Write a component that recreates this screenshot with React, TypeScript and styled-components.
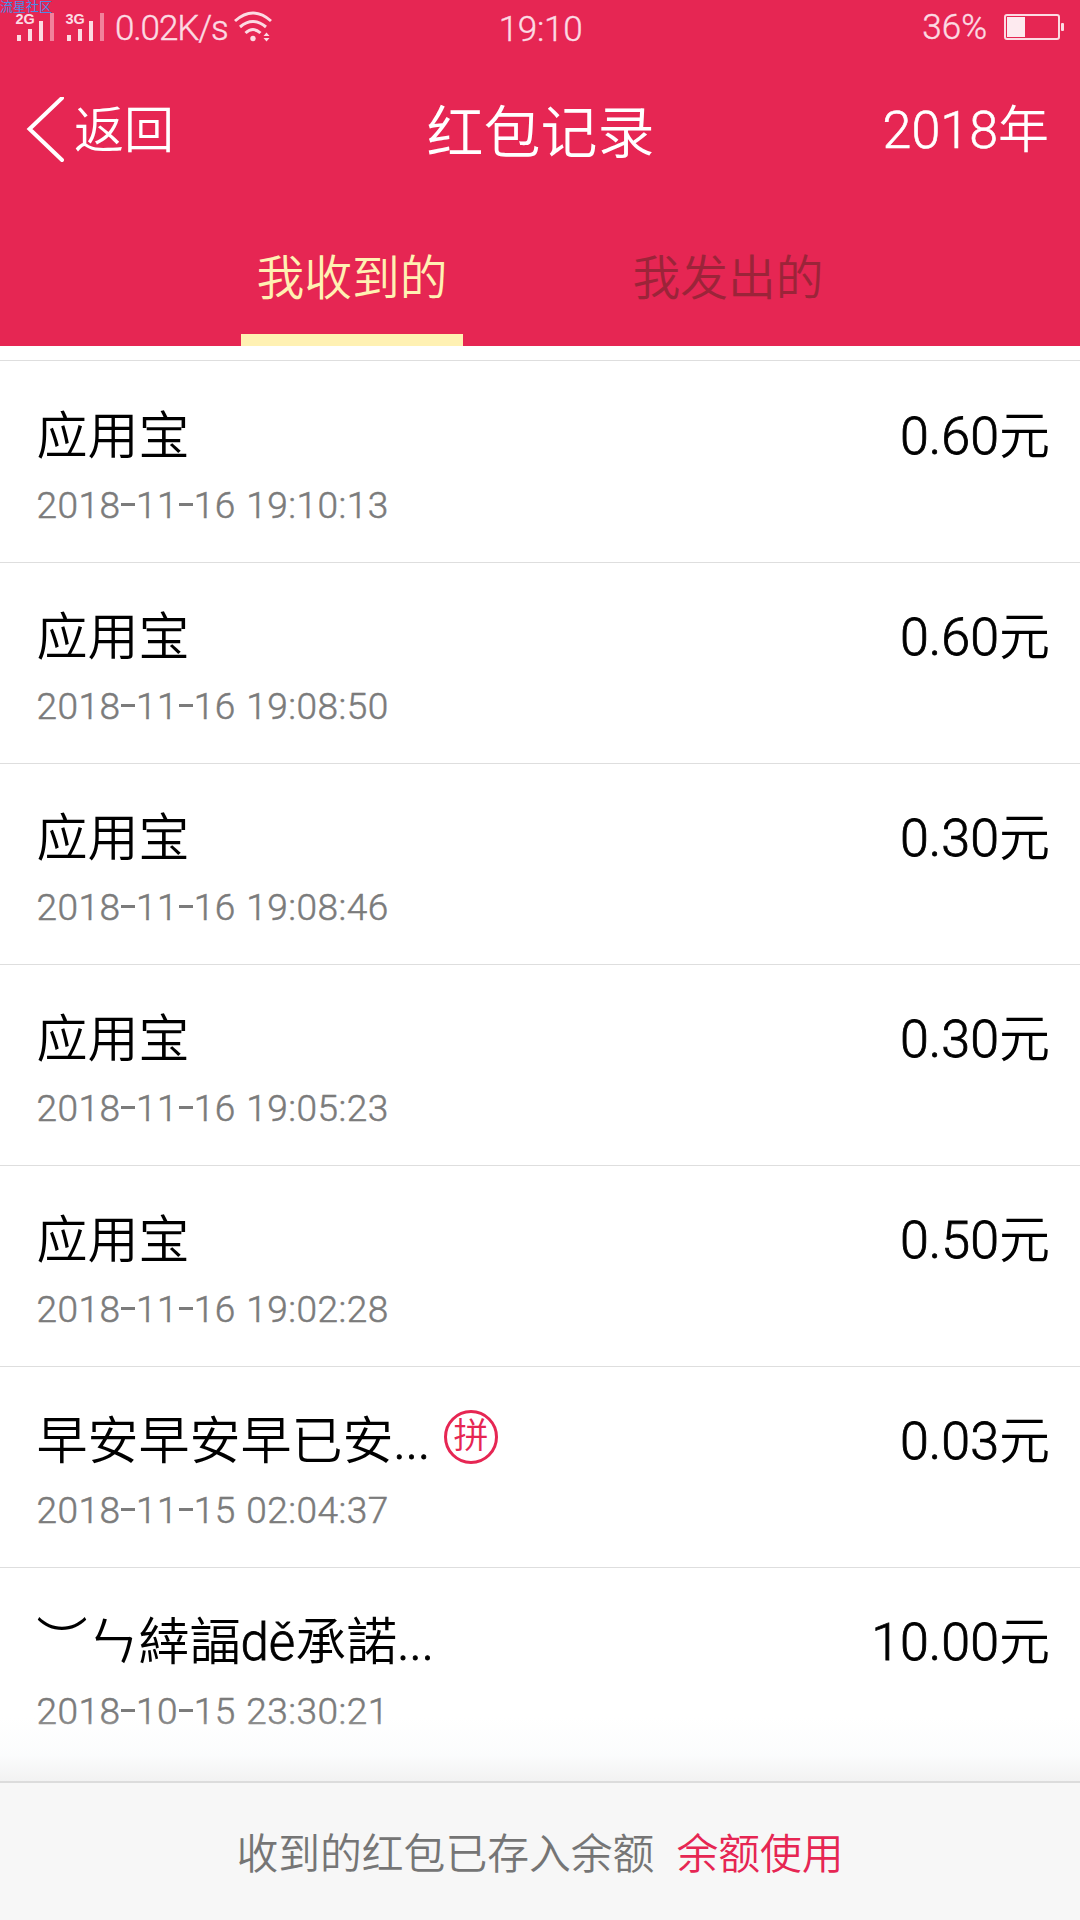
import React from "react";
import styled, { createGlobalStyle } from "styled-components";

const PINK = "#e62653";
const CREAM = "#fff1b3";
const FONT = `Roboto, "Noto Sans CJK SC", "Noto Sans CJK TC", sans-serif`;

const GlobalStyle = createGlobalStyle`
  *, *::before, *::after { box-sizing: border-box; }
  body { margin: 0; background: #fff; font-family: ${FONT}; }
`;

const Screen = styled.div`
  display: flex;
  flex-direction: column;
  width: 1080px;
  height: 1920px;
  overflow: hidden;
  background: #fff;
`;

const Header = styled.header`
  position: relative;
  display: flex;
  flex-direction: column;
  flex: none;
  height: 346px;
  background: ${PINK};
  color: #fff;
`;

const Watermark = styled.span`
  position: absolute;
  left: 0;
  top: 0;
  font-size: 13px;
  line-height: 13px;
  color: #4a8be6;
`;

const StatusBar = styled.div`
  display: grid;
  grid-template-columns: 1fr auto 1fr;
  height: 56px;
  padding: 0 15px 0 17px;
  color: #fcdbe3;
`;

const StatusGroup = styled.div<{ $end?: boolean }>`
  display: flex;
  align-items: flex-start;
  justify-content: ${(p) => (p.$end ? "flex-end" : "flex-start")};
`;

const StatusText = styled.span<{ $top: number; $spacing?: number; $pull?: number }>`
  margin-top: ${(p) => p.$top}px;
  margin-left: ${(p) => -(p.$pull ?? 0)}px;
  font-size: 35px;
  line-height: 40px;
  font-weight: 300;
  -webkit-text-stroke: 0.4px currentColor;
  letter-spacing: ${(p) => p.$spacing ?? 0}px;
  white-space: nowrap;
`;

const SignalIcon = styled.svg`
  flex: none;
  overflow: visible;
  width: 38px;
  height: 30px;
  margin: 12px 12px 0 0;
`;

const WifiIcon = styled.svg`
  flex: none;
  width: 38px;
  height: 32px;
  margin: 11px 0 0 6px;
`;

const BatteryIcon = styled.svg`
  flex: none;
  width: 61px;
  height: 26px;
  margin: 14px 0 0 17px;
`;

const NavBar = styled.nav`
  display: grid;
  grid-template-columns: 1fr auto 1fr;
  align-items: center;
  height: 148px;
  padding: 0 31px 0 26px;
`;

const BackButton = styled.button`
  display: flex;
  align-items: center;
  gap: 10px;
  padding: 0;
  border: 0;
  background: none;
  color: inherit;
  font: 350 50px/60px ${FONT};
`;

const BackLabel = styled.span`
  margin-top: 2px;
`;

const Title = styled.h1`
  margin: 7px -3px 0 3px;
  font-size: 57px;
  line-height: 66px;
  font-weight: 350;
`;

const YearButton = styled(BackButton)`
  justify-self: end;
  gap: 0;
  margin-top: 2px;
  font-size: 51px;
`;

const Tabs = styled.div`
  display: flex;
  justify-content: center;
  gap: 154px;
  height: 142px;
`;

const Tab = styled.button<{ $active?: boolean }>`
  width: 222px;
  padding: 0;
  border: 0;
  border-bottom: 12px solid ${(p) => (p.$active ? CREAM : "transparent")};
  background: none;
  color: ${(p) => (p.$active ? CREAM : "#9b2439")};
  font: 350 47.8px/56px ${FONT};
`;

const TabLabel = styled.span`
  display: block;
  margin-top: 20px;
`;

const List = styled.main`
  flex: 1;
  display: flex;
  flex-direction: column;
  padding-top: 14px;
`;

const Row = styled.article`
  flex: none;
  display: flex;
  justify-content: space-between;
  height: 201px;
  padding: 45px 30px 0 36.5px;
  border-top: 1px solid #dedede;
  &:first-child { height: 202px; padding-top: 46px; }
`;

const Info = styled.div`
  display: flex;
  flex-direction: column;
`;

const NameLine = styled.div`
  display: flex;
  align-items: center;
  height: 60px;
  color: #000;
  font-size: 51px;
  line-height: 60px;
  font-weight: 350;
  white-space: nowrap;
`;

const Latin = styled.span`
  font-weight: 300;
  -webkit-text-stroke: 0.8px currentColor;
`;

const Badge = styled.span`
  display: flex;
  align-items: center;
  justify-content: center;
  width: 54px;
  height: 54px;
  margin: -10px 0 0 14px;
  border: 3px solid ${PINK};
  border-radius: 50%;
  color: ${PINK};
  font-size: 35px;
  line-height: 48px;
`;

const DateLine = styled.time`
  margin-top: 18px;
  color: #7b7b7b;
  font-size: 37px;
  line-height: 42px;
  font-weight: 300;
  letter-spacing: 0.5px;
  word-spacing: 1px;
  -webkit-text-stroke: 0.5px currentColor;
  white-space: nowrap;
`;

const Dash = styled.span`
  display: inline-block;
  width: 14px;
  height: 3px;
  margin: 0 1px 0 0.5px;
  vertical-align: 12px;
  background: currentColor;
`;

const Amount = styled.span`
  height: 60px;
  color: #000;
  font-size: 51px;
  line-height: 60px;
  font-weight: 350;
  white-space: nowrap;
`;

const Digits = styled.span<{ $stroke?: number }>`
  font-size: 52px;
  font-weight: 300;
  -webkit-text-stroke: ${(p) => p.$stroke ?? 0.8}px currentColor;
`;

const Footer = styled.footer`
  position: relative;
  flex: none;
  display: flex;
  justify-content: center;
  height: 139px;
  padding-top: 44px;
  border-top: 2px solid #dcdcdc;
  background: #f7f7f7;
  color: #757575;
  font-size: 41.8px;
  line-height: 56px;
  font-weight: 350;
  &::before {
    content: "";
    position: absolute;
    left: 0;
    right: 0;
    bottom: 100%;
    height: 64px;
    margin-bottom: 2px;
    background: linear-gradient(rgba(240, 240, 240, 0), rgba(250, 251, 252, 0.8) 60%, #f2f2f2);
  }
`;

const FooterLink = styled.a`
  margin-left: 22px;
  color: ${PINK};
`;

const records = [
  { name: "应用宝", amount: "0.60", date: "2018-11-16 19:10:13" },
  { name: "应用宝", amount: "0.60", date: "2018-11-16 19:08:50" },
  { name: "应用宝", amount: "0.30", date: "2018-11-16 19:08:46" },
  { name: "应用宝", amount: "0.30", date: "2018-11-16 19:05:23" },
  { name: "应用宝", amount: "0.50", date: "2018-11-16 19:02:28" },
  { name: "早安早安早已安...", amount: "0.03", date: "2018-11-15 02:04:37", lucky: true },
  { name: "︶ㄣ緈諨dě承諾...", amount: "10.00", date: "2018-10-15 23:30:21" },
];

function Signal({ label }: { label: string }) {
  return (
    <SignalIcon viewBox="0 0 38 30" fill="#fcdbe3">
      <text x="-1.5" y="12" fontSize="14.5" fontWeight="700" fontFamily="Liberation Sans, sans-serif">{label}</text>
      <rect x="0" y="23" width="4" height="6" />
      <rect x="11" y="17" width="4" height="12" />
      <rect x="22" y="9" width="4" height="20" />
      <rect x="33" y="1" width="4" height="28" opacity="0.5" />
    </SignalIcon>
  );
}

function MixedName({ text }: { text: string }) {
  return (
    <>
      {text.split(/([a-zě.]+)/).map((part, i) => (i % 2 ? <Latin key={i}>{part}</Latin> : part))}
    </>
  );
}

export default function App() {
  return (
    <>
      <GlobalStyle />
      <Screen>
        <Header>
          <StatusBar>
            <StatusGroup>
              <Signal label="2G" />
              <Signal label="3G" />
              <StatusText $top={9} $spacing={-1.1} $pull={2}>0.02K/s</StatusText>
              <WifiIcon viewBox="0 0 38 32" fill="none" stroke="#fcdbe3" strokeWidth="3">
                <path d="M1 10Q19 -6 37 10M6 16Q19 5 32 16M11.500 22Q19 15 26.500 22" />
                <circle cx="19" cy="27.500" r="2.700" fill="#fcdbe3" stroke="none" />
                <path d="M29.500 25L32.500 21.500L35.500 25ZM29.500 27L32.500 30.500L35.500 27Z" fill="#fcdbe3" stroke="none" />
              </WifiIcon>
            </StatusGroup>
            <StatusText $top={10} $spacing={-0.3} $pull={1}>19:10</StatusText>
            <StatusGroup $end>
              <StatusText $top={8}>36%</StatusText>
              <BatteryIcon viewBox="0 0 61 26">
                <rect x="1" y="1" width="54" height="24" rx="2" fill="none" stroke="#fcdbe3" strokeWidth="2" />
                <rect x="3" y="3" width="18" height="20" fill="#fdeaef" />
                <rect x="57" y="9" width="3" height="8" rx="1" fill="#fcdbe3" />
              </BatteryIcon>
            </StatusGroup>
          </StatusBar>
          <Watermark>流星社区</Watermark>
          <NavBar>
            <BackButton>
              <svg width="38" height="66" viewBox="0 0 38 66" fill="none" stroke="#fff" strokeWidth="4">
                <path d="M36 1L3.500 32L36 63" strokeLinecap="round" />
              </svg>
              <BackLabel>返回</BackLabel>
            </BackButton>
            <Title>红包记录</Title>
            <YearButton><Digits $stroke={0.6}>2018</Digits>年</YearButton>
          </NavBar>
          <Tabs>
            <Tab $active><TabLabel>我收到的</TabLabel></Tab>
            <Tab><TabLabel>我发出的</TabLabel></Tab>
          </Tabs>
        </Header>
        <List>
          {records.map((r) => (
            <Row key={r.date}>
              <Info>
                <NameLine>
                  <span><MixedName text={r.name} /></span>
                  {r.lucky && <Badge>拼</Badge>}
                </NameLine>
                <DateLine>
                  {r.date.split("-").map((part, i) => (
                    <React.Fragment key={i}>
                      {i > 0 && <Dash />}
                      {part}
                    </React.Fragment>
                  ))}
                </DateLine>
              </Info>
              <Amount><Digits>{r.amount}</Digits>元</Amount>
            </Row>
          ))}
        </List>
        <Footer>
          <span>收到的红包已存入余额</span>
          <FooterLink>余额使用</FooterLink>
        </Footer>
      </Screen>
    </>
  );
}
